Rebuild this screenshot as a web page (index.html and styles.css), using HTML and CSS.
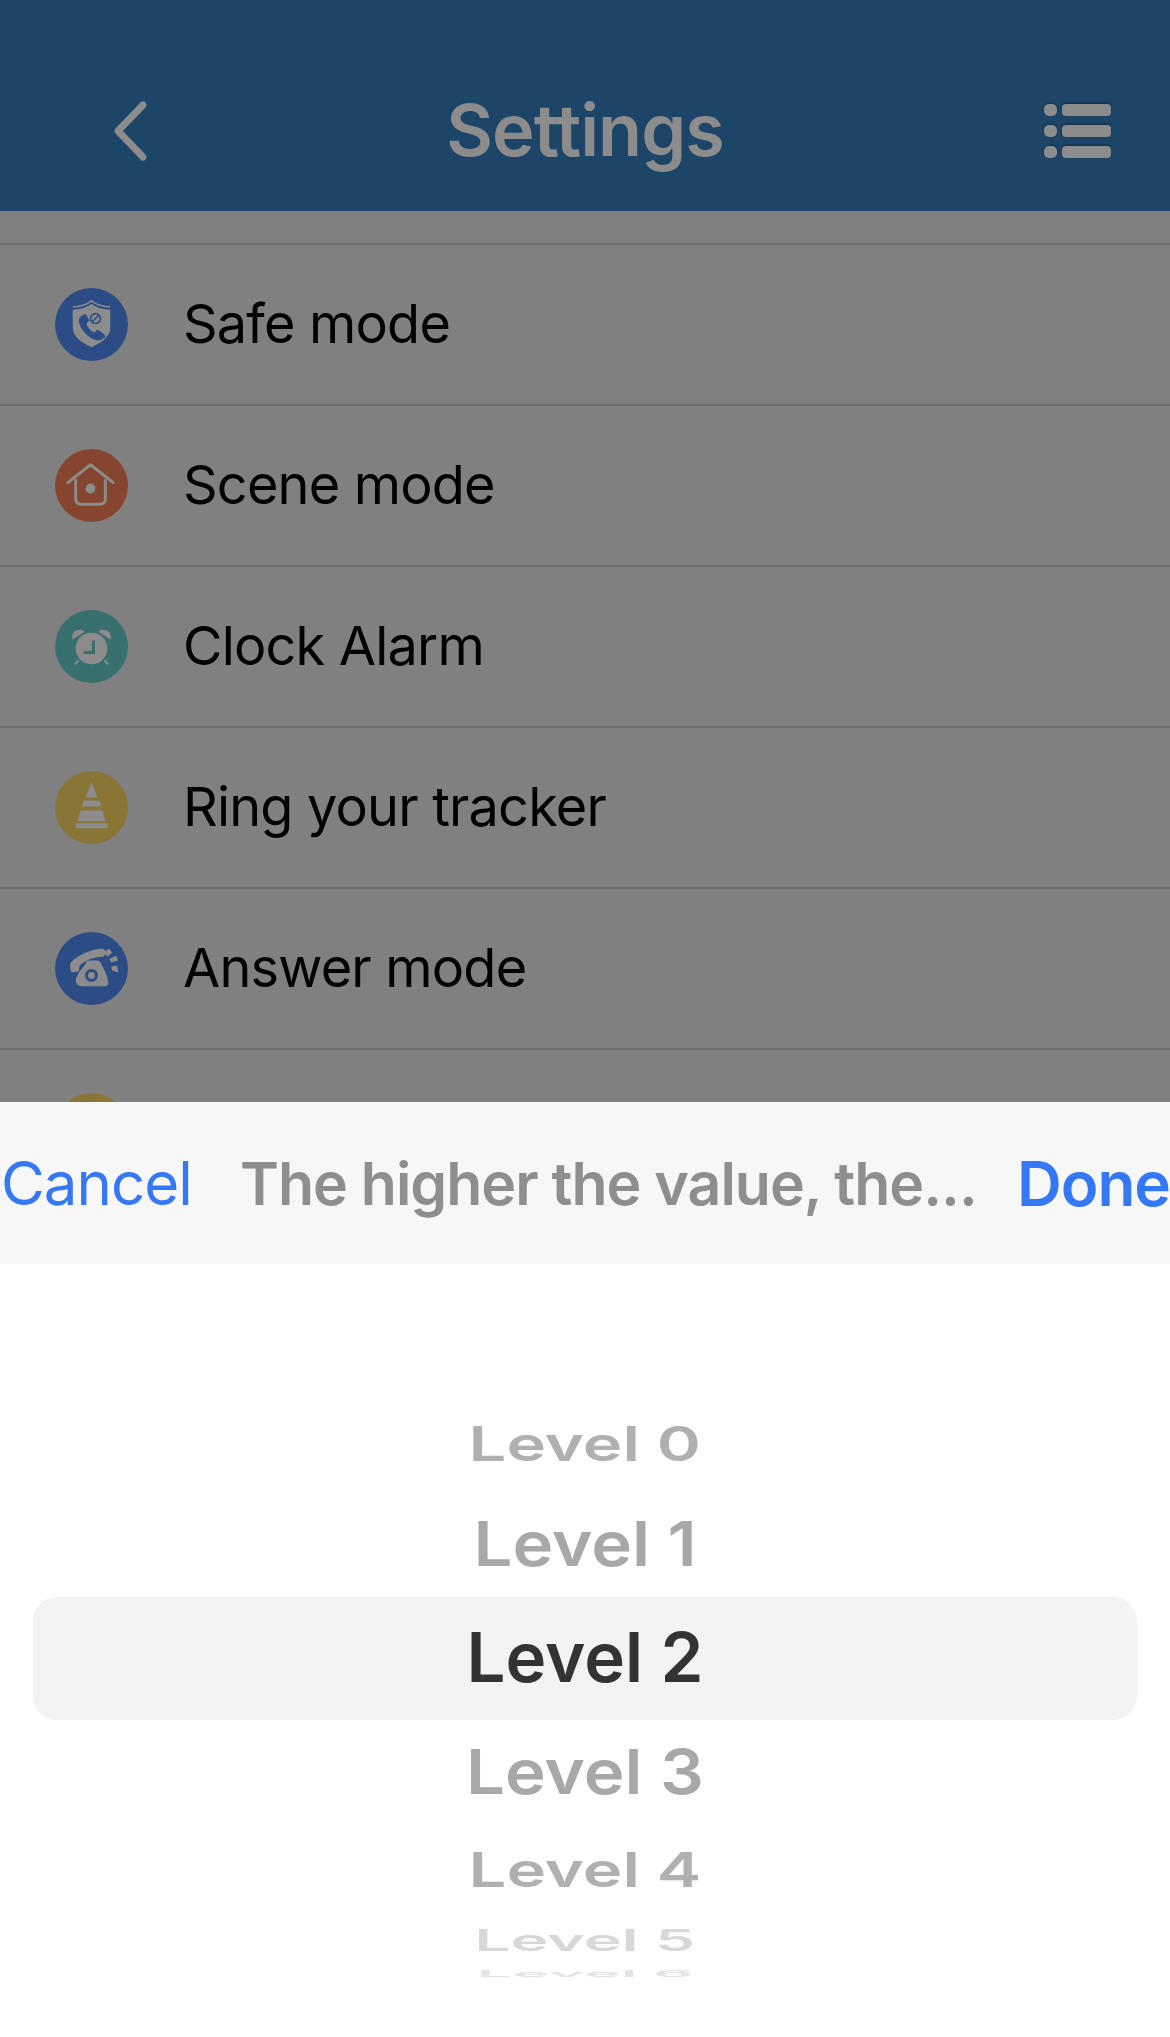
FILE: index.html
```html
<!DOCTYPE html>
<html lang="en">
<head>
<meta charset="utf-8">
<title>Settings</title>
<link rel="stylesheet" href="styles.css">
</head>
<body>
<div class="page">
  <header class="topbar">
    <svg class="back" viewBox="0 0 36 60"><path d="M31 4 6 30l25 26" fill="none" stroke="#8c8c8c" stroke-width="7" stroke-linecap="round" stroke-linejoin="round"/></svg>
    <h1 class="title">Settings</h1>
    <svg class="menu" viewBox="0 0 67 54"><g fill="#8c8c8c"><rect x="0" y="0" width="13" height="12" rx="5"/><rect x="0" y="21" width="13" height="12" rx="5"/><rect x="0" y="42" width="13" height="12" rx="5"/><rect x="18" y="0" width="49" height="12" rx="4"/><rect x="18" y="21" width="49" height="12" rx="4"/><rect x="18" y="42" width="49" height="12" rx="4"/></g></svg>
  </header>
  <main class="list">
    <div class="row">
      <span class="badge blue"><svg viewBox="0 0 74 74"><path d="M18 19c7 0 14-2 19-6 5 4 12 6 19 6" fill="none" stroke="#8c8c8c" stroke-width="1.6"/><path d="M18 22c7 0 14-2 19-6 5 4 12 6 19 6v18c0 9-8 15-19 20-11-5-19-11-19-20z" fill="#8c8c8c"/><path d="M26 29c-3 3-2 9 3 15s12 10 17 9l5-3-1-3-7-5-3 3c-4-1-7-5-8-9l3-3-4-7z" fill="#2c4c85"/><circle cx="41" cy="31" r="5" fill="none" stroke="#2c4c85" stroke-width="1.6"/><path d="m38 34 6-6" stroke="#2c4c85" stroke-width="1.6"/></svg></span>
      <span class="label">Safe mode</span>
    </div>
    <div class="row">
      <span class="badge red"><svg viewBox="0 0 74 74"><path d="M13 34 36 16l23 18" fill="none" stroke="#8c8c8c" stroke-width="3" stroke-linecap="round" stroke-linejoin="round"/><path d="M21 32v19c0 3 2 5 5 5h20c3 0 5-2 5-5V32" fill="none" stroke="#8c8c8c" stroke-width="3" stroke-linecap="round"/><circle cx="36" cy="40" r="5" fill="#8c8c8c"/></svg></span>
      <span class="label">Scene mode</span>
    </div>
    <div class="row">
      <span class="badge teal"><svg viewBox="0 0 74 74"><path d="M18 30c-2-5 1-10 8-10 2 0 3 1 4 2z M56 30c2-5-1-10-8-10-2 0-3 1-4 2z" fill="#8c8c8c"/><circle cx="37" cy="39" r="16" fill="#8c8c8c"/><path d="M39 31v12h-10" fill="none" stroke="#37706f" stroke-width="3"/><path d="m24 51-4 4M50 51l4 4" stroke="#8c8c8c" stroke-width="2"/></svg></span>
      <span class="label">Clock Alarm</span>
    </div>
    <div class="row">
      <span class="badge gold"><svg viewBox="0 0 74 74"><g fill="#8c8c8c"><path d="M37 11l6 16H31z"/><path d="M29 30h16l2 6H27z"/><path d="M26 40h22l3 11H23z"/><rect x="21" y="53" width="32" height="5" rx="1"/></g></svg></span>
      <span class="label">Ring your tracker</span>
    </div>
    <div class="row">
      <span class="badge blue"><svg viewBox="0 0 74 74"><g fill="#8c8c8c"><path d="M16 31c6-7 19-13 31-14 3 0 5 2 5 5l-3 3c-10 0-19 4-24 9l-1 6-7 1c-2-3-2-7-1-10z"/><path d="M31 33c0-3 2-4 4-4h7c3 0 5 2 5 4 3 5 6 11 7 17 0 4-1 5-4 5H27c-3 0-6-2-6-6 1-6 6-12 10-16z"/><path d="M50 20l5-3 3 4-5 4zM55 27l7-3 2 5-7 2zM57 35l6-1 1 7-6-2z"/></g><circle cx="37" cy="44" r="5" fill="none" stroke="#2c4c85" stroke-width="3"/></svg></span>
      <span class="label">Answer mode</span>
    </div>
    <div class="row">
      <span class="badge gold"></span>
    </div>
  </main>
  <section class="sheet">
    <div class="toolbar">
      <span class="cancel">Cancel</span>
      <span class="hint">The higher the value, the...</span>
      <span class="done">Done</span>
    </div>
    <div class="picker">
      <div class="selection"></div>
      <div class="wheel">
        <div class="item i0">Level 0</div>
        <div class="item i1">Level 1</div>
        <div class="item i2">Level 2</div>
        <div class="item i3">Level 3</div>
        <div class="item i4">Level 4</div>
        <div class="item i5">Level 5</div>
        <div class="item i6">Level 6</div>
      </div>
    </div>
  </section>
</div>
</body>
</html>
```
FILE: styles.css
```css
* { box-sizing: border-box; }
html, body { margin: 0; padding: 0; }
body { font-family: "Inter", "Liberation Sans", sans-serif; background: #fff; }
.page { width: 1170px; height: 2037px; display: flex; flex-direction: column; overflow: hidden; }
.topbar { height: 211px; flex: none; background: #1c4567; display: grid; grid-template-columns: 1fr auto 1fr; align-items: center; padding: 48px 59px 0; }
.back { width: 36px; height: 60px; justify-self: start; margin: 2px 0 0 53px; }
.title { margin: 0; font-size: 72px; font-weight: 600; color: #8c8c8c; line-height: 80px; letter-spacing: -1px; }
.menu { width: 67px; height: 54px; justify-self: end; margin-top: 2px; filter: drop-shadow(0 -1px 1px rgba(0,0,0,.35)); }
.list { height: 891px; flex: none; background: #808080; padding-top: 32px; overflow: hidden; }
.row { height: 161px; border-top: 2px solid #6e6e6e; display: flex; align-items: center; padding-left: 55px; gap: 55px; }
.badge { width: 73px; height: 73px; border-radius: 50%; flex: none; display: block; }
.badge svg { display: block; width: 73px; height: 73px; }
.blue { background: #2c4c85; }
.red { background: #86452f; }
.teal { background: #37706f; }
.gold { background: #897535; }
.label { font-size: 54px; color: #000; line-height: 64px; letter-spacing: -.8px; margin-top: -2px; }
.sheet { flex: 1; display: flex; flex-direction: column; background: #fff; }
.toolbar { height: 162px; flex: none; background: #f7f7f7; display: flex; align-items: center; justify-content: space-between; font-size: 60px; }
.cancel { color: #3478f6; letter-spacing: -1px; padding-left: 1px; font-weight: 400; }
.hint { color: #8e8e8e; font-weight: 600; font-size: 59px; letter-spacing: -1px; margin-left: 8px; }
.done { color: #3478f6; font-weight: 600; font-size: 62px; letter-spacing: -1px; }
.picker { position: relative; flex: 1; }
.selection { position: absolute; left: 33px; right: 33px; top: 333px; height: 123px; border-radius: 24px; background: #f3f3f3; }
.wheel { position: relative; display: flex; flex-direction: column; align-items: center; padding-top: 133px; }
.item { font-weight: 600; font-size: 69px; white-space: nowrap; }
.i0 { height: 92px; line-height: 92px; transform: scale(.97,.7); color: #b0b0b0; }
.i1 { height: 109px; line-height: 109px; transform: scaleY(.9); color: #a8a8a8; }
.i2 { height: 118px; line-height: 118px; color: #333; }
.i3 { height: 110px; line-height: 110px; transform: scaleY(.9); color: #a8a8a8; }
.i4 { height: 87px; line-height: 87px; transform: scale(.97,.7); color: #b0b0b0; }
.i5 { height: 54px; line-height: 54px; transform: scale(.93,.43); color: #d8d8d8; }
.i6 { height: 14px; line-height: 14px; transform: scale(.91,.13); color: #e4e4e4; }
```
